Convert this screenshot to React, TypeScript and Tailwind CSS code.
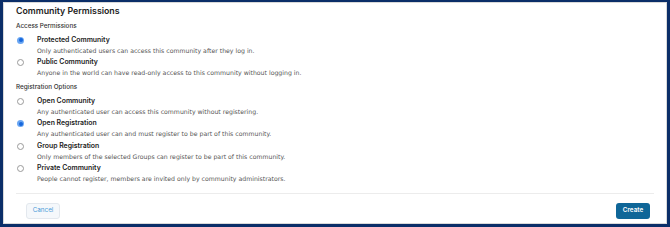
const heading = "font-['Inter','Noto_Sans',sans-serif]"
const body = "font-['DejaVu_Sans','Verdana',sans-serif]"

type Option = {
    id: string
    label: string
    description: string
    checked?: boolean
}

const access: Option[] = [
    {
        id: 'protected',
        label: 'Protected Community',
        description: 'Only authenticated users can access this community after they log in.',
        checked: true,
    },
    {
        id: 'public',
        label: 'Public Community',
        description: 'Anyone in the world can have read-only access to this community without logging in.',
    },
]

const registration: Option[] = [
    {
        id: 'open-community',
        label: 'Open Community',
        description: 'Any authenticated user can access this community without registering.',
    },
    {
        id: 'open-registration',
        label: 'Open Registration',
        description: 'Any authenticated user can and must register to be part of this community.',
        checked: true,
    },
    {
        id: 'group',
        label: 'Group Registration',
        description: 'Only members of the selected Groups can register to be part of this community.',
    },
    {
        id: 'private',
        label: 'Private Community',
        description: 'People cannot register, members are invited only by community administrators.',
    },
]

function Radio({ checked }: { checked?: boolean }) {
    return checked ? (
        <div className="w-[7px] h-[7px] rounded-full bg-[#6aa6f2] flex items-center justify-center">
            <div className="w-[4px] h-[4px] rounded-full bg-[#1767dc]" />
        </div>
    ) : (
        <div className="w-[7px] h-[7px] rounded-full border border-[#9a9a9a] bg-white" />
    )
}

function OptionGroup({ title, options }: { title: string; options: Option[] }) {
    return (
        <div>
            <div className={`${heading} text-[6.3px] font-medium text-[#333] leading-[10px]`}>{title}</div>
            <div className="mt-[2.5px]">
                {options.map(opt => (
                    <div key={opt.id} className="flex h-[22.67px]">
                        <div className="w-[21px] pl-[1px] pt-[3px] shrink-0">
                            <Radio checked={opt.checked} />
                        </div>
                        <div>
                            <div className={`${heading} text-[6.9px] font-semibold text-[#222] leading-[11px]`}>
                                {opt.label}
                            </div>
                            <div className={`${body} text-[6.2px] text-[#555] leading-[11px]`}>
                                {opt.description}
                            </div>
                        </div>
                    </div>
                ))}
            </div>
        </div>
    )
}

export default function App() {
    return (
        <div className="w-[670px] h-[227px] bg-[#0b2e68] pl-[3px] pt-[2px] pr-[3px] pb-[3px]">
            <div className="h-full bg-white border border-[#d9d9d9] flex flex-col">
                <div className="px-[12px] pt-[1px]">
                    <div className="font-['Inter','Noto_Sans',sans-serif] text-[8.8px] font-semibold text-[#222] leading-[14px]">
                        Community Permissions
                    </div>
                    <div className="mt-[3px] flex flex-col gap-[3.2px]">
                        <OptionGroup title="Access Permissions" options={access} />
                        <OptionGroup title="Registration Options" options={registration} />
                    </div>
                </div>
                <div className="mx-[12px] mt-auto border-t border-[#ececec] flex items-start justify-between pl-[10px] pr-[4px] pt-[9px] h-[30px]">
                    <button className={`${heading} text-[6.3px] text-[#4a9bd9] bg-[#f5f8fb] border border-[#e3e8ee] rounded-[3px] w-[34px] h-[16px]`}>
                        Cancel
                    </button>
                    <button className={`${heading} text-[6.3px] font-semibold text-white bg-[#0f6698] rounded-[3px] w-[34px] h-[16px]`}>
                        Create
                    </button>
                </div>
            </div>
        </div>
    )
}
